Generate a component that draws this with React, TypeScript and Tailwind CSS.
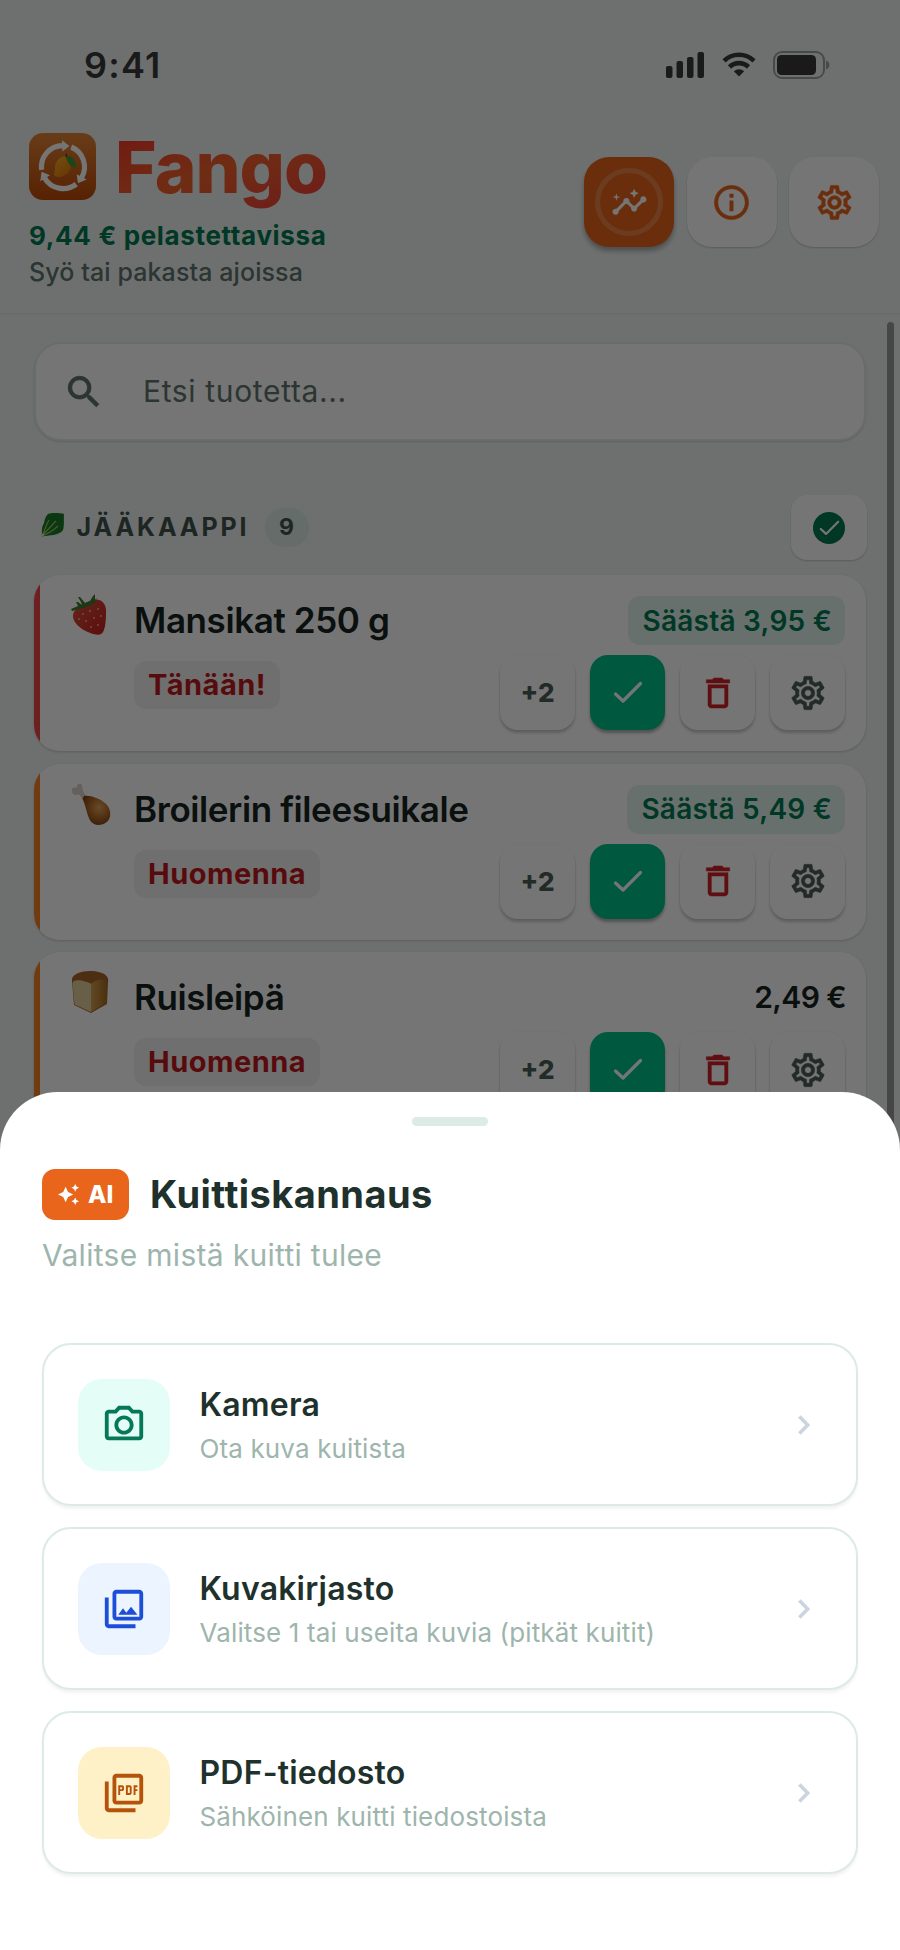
import React from "react";
import {
  MdSearch, MdInsights, MdInfoOutline, MdOutlineSettings, MdDeleteOutline, MdOutlineCameraAlt,
  MdOutlinePhotoLibrary, MdOutlinePictureAsPdf, MdAutoAwesome,
} from "react-icons/md";

function Logo() {
  const arm = (
    <>
      <path d="M12.6 36.9A21.4 21.4 0 0 1 34 12.6" fill="none" stroke="#fff" strokeWidth="5.2" />
      <path d="M33 7.2L40.5 13L33.4 18.6Z" fill="#fff" />
    </>
  );
  return (
    <svg viewBox="0 0 67 67" className="size-[67px] shrink-0 rounded-[14px]">
      <defs>
        <linearGradient id="lg" x1="0" y1="0" x2="0" y2="1">
          <stop offset="0" stopColor="#e48438" />
          <stop offset="1" stopColor="#bc4a06" />
        </linearGradient>
        <linearGradient id="mango" x1="0" y1="0" x2="0.7" y2="1">
          <stop offset="0" stopColor="#f5b320" />
          <stop offset="1" stopColor="#e8790f" />
        </linearGradient>
      </defs>
      <rect width="67" height="67" fill="url(#lg)" />
      <g>{arm}</g>
      <g transform="rotate(120 34 34)">{arm}</g>
      <g transform="rotate(240 34 34)">{arm}</g>
      <path d="M37 23C31 23 26 28 26 35C26 39 24 42 26 43C32 46 42 41 42 33C42 27 41 23 37 23Z" fill="url(#mango)" />
      <path d="M37 23C42 22 47 26 47 35C41 34 38 30 37 23Z" fill="#3f9a35" />
      <path d="M37 24L37.5 20.5" stroke="#5a3a18" strokeWidth="1.3" />
    </svg>
  );
}

function Leaf() {
  return (
    <svg viewBox="0 0 24 24" className="size-6">
      <path d="M8 1C12 -0.500 20 0 24 1C23.500 6 24.500 12 23 17C19 23 9 22 2 23.500C2 19 1 15 4 10C4.500 6 6 3 8 1Z" fill="#1c7a26" />
      <path d="M1.500 23C7 18 11 13 16 8M2.500 22C5 17 6 12 9 7M3 22.500C9 20 14 17 18 13" stroke="#9cc062" strokeWidth="1.200" fill="none" />
      <path d="M0.500 22L3.500 20.500L4.500 22L1.500 24Z" fill="#e3e8c0" />
    </svg>
  );
}

function Strawberry() {
  return (
    <svg viewBox="0 0 36 42" className="h-[42px] w-9">
      <defs>
        <linearGradient id="berry" x1="0" y1="0" x2="1" y2="1">
          <stop offset="0" stopColor="#e0503f" />
          <stop offset="1" stopColor="#c3201f" />
        </linearGradient>
      </defs>
      <path d="M22 6C30 4 36 10 35 19C35 28 34 38 30 40C25 43 4 35 2 23C1 15 12 9 22 6Z" fill="url(#berry)" />
      <path d="M0 15L7 12L5 8L7 8L11 11L10 8L7 3L9 3L14 9L19 7L22 2L24 0L24 6L26 4L23 10L15 13L9 15L1 17Z" fill="#3f7a2c" />
      <g fill="#f6b48a">
        <circle cx="12" cy="20" r=".9" /><circle cx="19" cy="17" r=".9" /><circle cx="27" cy="15" r=".9" />
        <circle cx="15" cy="27" r=".9" /><circle cx="23" cy="24" r=".9" /><circle cx="30" cy="22" r=".9" />
        <circle cx="20" cy="33" r=".9" /><circle cx="27" cy="31" r=".9" /><circle cx="8" cy="25" r=".9" />
      </g>
    </svg>
  );
}

function Drumstick() {
  return (
    <svg viewBox="0 0 40 42" className="h-[42px] w-10">
      <defs>
        <radialGradient id="drum" cx="0.6" cy="0.4" r="0.65">
          <stop offset="0" stopColor="#e0a558" />
          <stop offset="0.5" stopColor="#b8702c" />
          <stop offset="1" stopColor="#7e3f12" />
        </radialGradient>
      </defs>
      <path d="M1 8C0 5 4 3 6 5C5 1 10 -1 11 3C12 7 11 9 17 15L13 18C9 12 8 10 5 12C2 12 1 10 1 8Z" fill="#d9d2c6" />
      <path d="M13 13C20 12 34 17 38 25C42 35 36 42 27 42C16 41 17 28 11.500 15.500Z" fill="url(#drum)" />
    </svg>
  );
}

function Bread() {
  return (
    <svg viewBox="0 0 38 42" className="h-[42px] w-[38px]">
      <defs>
        <linearGradient id="side" x1="0" y1="0" x2="1" y2="0">
          <stop offset="0" stopColor="#d3a050" />
          <stop offset="1" stopColor="#a86a22" />
        </linearGradient>
      </defs>
      <path d="M1 10C0 3 10 0 19 0C28 0 39 3 37 11L36 33L20 42L3 34Z" fill="#a8642a" />
      <path d="M1.500 12C3 7 15 10 20.500 13L20 41L3.500 33.500Z" fill="#e3cfa0" />
      <path d="M20 13C25 8 35 7 36 12L35 32L20 41Z" fill="url(#side)" />
    </svg>
  );
}

function Check({ className }: { className: string }) {
  return (
    <svg viewBox="0 0 30 23" className={className} fill="none" stroke="currentColor" strokeWidth="3.2" strokeLinecap="round" strokeLinejoin="round">
      <path d="M2.500 13L10 20L27.500 2.500" />
    </svg>
  );
}

const actionClass =
  "flex size-[75px] items-center justify-center rounded-[18px] bg-white shadow-[0_3px_3px_rgba(0,0,0,0.2),0_0_1px_1px_rgba(0,0,0,0.025)]";

function ProductCard({ icon, name, due, accent, saving, price }: {
  icon: React.ReactNode; name: string; due: string; accent: string; saving?: string; price?: string;
}) {
  return (
    <div className="flex h-[176px] w-[832px] overflow-hidden rounded-[26px] bg-white shadow-[0_1px_3px_rgba(0,0,0,0.18)]">
      <div className={"w-1.5 shrink-0 " + accent} />
      <div className="flex flex-1 pl-[31px] pr-[21px] pt-5">
        <div className="-mt-px w-[63px] shrink-0">{icon}</div>
        <div className="flex flex-1 flex-col">
          <div className="flex h-[51px] items-center justify-between">
            <span className="text-[35px] font-semibold tracking-[-0.4px] text-[#16241f]">{name}</span>
            {saving ? (
              <span className="flex h-[49px] items-center rounded-xl bg-[#e0f5ee] pr-[13px] pl-[14px] text-[28px] font-semibold tracking-[0.25px] text-[#007a52]">
                {saving}
              </span>
            ) : (
              <span className="-mr-px text-[30px] font-semibold tracking-[-0.6px] text-[#16241f]">{price}</span>
            )}
          </div>
          <div className="flex justify-between">
            <span className="mt-[15px] flex h-12 items-center self-start rounded-xl bg-[#f2f2f2] px-3.5 text-[29px] font-bold tracking-[0.5px] text-[#c01a1e]">
              {due}
            </span>
            <div className="mt-[9px] flex gap-[15px]">
              <div className={actionClass}><span className="text-[26px] font-extrabold text-[#4d5f59]">+2</span></div>
              <div className="flex size-[75px] items-center justify-center rounded-[18px] bg-[#00c28a] text-white shadow-[0_3px_3px_rgba(0,0,0,0.3)]">
                <Check className="h-[23px] w-[30px]" />
              </div>
              <div className={actionClass}><MdDeleteOutline className="size-[40px] stroke-[0.3] text-[#cf2226] [&>path[fill=none]]:stroke-none" /></div>
              <div className={actionClass}><MdOutlineSettings className="size-[40px] stroke-[0.3] text-[#4d5f59] [&>path[fill=none]]:stroke-none" /></div>
            </div>
          </div>
        </div>
      </div>
    </div>
  );
}

function Option({ icon, tile, title, text }: { icon: React.ReactNode; tile: string; title: string; text: string }) {
  return (
    <div className="flex h-[163px] items-center rounded-[29px] border-2 border-[#dcebe6] bg-white pl-[34px] pr-[46px] shadow-[0_3px_3px_rgba(0,0,0,0.05)]">
      <div className={"flex size-[92px] items-center justify-center rounded-3xl " + tile}>{icon}</div>
      <div className="ml-[29.500px] flex flex-1 flex-col pt-[7px]">
        <span className="text-[32px] leading-[42px] font-semibold tracking-[0.2px] text-[#1f312c]">{title}</span>
        <span className="text-[26px] leading-[46px] tracking-[0.13px] text-[#9db5ac]">{text}</span>
      </div>
      <svg viewBox="0 0 12 20" className="h-5 w-3" fill="none" stroke="#cbd5e0" strokeWidth="3.6">
        <path d="M1.400 1.400L9.700 10L1.400 18.600" />
      </svg>
    </div>
  );
}

export default function App() {
  return (
    <div className="relative h-[1950px] w-[900px] overflow-hidden bg-[#f0f5f3] font-['Inter',sans-serif]">
      <div className="flex h-[129px] items-center pl-[84px] pr-[70px] text-[#3a3a3a]">
        <span className="flex-1 text-[36px] font-semibold tracking-[1.200px]">9:41</span>
        <svg viewBox="0 0 38 26" className="h-[26px] w-[38px]" fill="currentColor">
          <rect x="0" y="14" width="6.5" height="12" rx="2" /><rect x="10.5" y="9" width="6.5" height="17" rx="2" />
          <rect x="21" y="5" width="6.5" height="21" rx="2" /><rect x="31.5" y="0" width="6.5" height="26" rx="2" />
        </svg>
        <svg viewBox="0 0 34 25" className="ml-[18px] h-[25px] w-[34px]" fill="none" stroke="currentColor" strokeWidth="4.6">
          <path d="M2 8.8A21.5 21.5 0 0 1 32 8.8" /><path d="M7.5 15A13.5 13.5 0 0 1 26.500 15" />
          <path d="M17 24.500L11.800 19.300A7.500 7.500 0 0 1 22.200 19.300Z" fill="currentColor" stroke="none" />
        </svg>
        <svg viewBox="0 0 57 28" className="ml-[17px] h-7 w-[57px]">
          <rect x="1" y="1" width="50" height="26" rx="8" fill="none" stroke="currentColor" strokeWidth="2" opacity=".45" />
          <rect x="4" y="4" width="39" height="20" rx="4.500" fill="currentColor" />
          <path d="M53 9.500C57.500 10.500 57.500 17.500 53 18.500Z" fill="currentColor" opacity=".45" />
        </svg>
      </div>

      <div className="flex h-[186px] border-b-2 border-[#e2ecea] pl-[29px] pr-[21px]">
        <div className="flex flex-1 flex-col pt-1">
          <div className="flex h-[67px] items-center">
            <Logo />
            <span className="ml-[18px] bg-linear-to-br from-[#f8292a] via-[#f2622c] to-[#f0353a] bg-clip-text pl-px pr-1 text-[71px] leading-[90px] font-extrabold tracking-[-1px] text-transparent">Fango</span>
          </div>
          <span className="mt-[17.500px] text-[26px] leading-9 font-bold tracking-[0.65px] text-[#007a52]">9,44 € pelastettavissa</span>
          <span className="text-[25px] leading-9 font-medium tracking-[0.1px] text-[#5f746d]">Syö tai pakasta ajoissa</span>
        </div>
        <div className="mt-7 flex gap-[12.500px]">
          <div className="flex size-[90px] items-center justify-center rounded-[25px] bg-[#e8651b] shadow-[0_4px_5px_rgba(0,0,0,0.3)]">
            <div className="flex size-[68px] items-center justify-center rounded-full border-5 border-white/20">
              <MdInsights className="size-[37px] shrink-0 text-white" />
            </div>
          </div>
          <div className="flex size-[90px] items-center justify-center rounded-[25px] bg-white shadow-[0_1px_2px_rgba(0,0,0,0.2)]">
            <MdInfoOutline className="size-[41px] stroke-[0.3] text-[#e8651b] [&>path[fill=none]]:stroke-none" />
          </div>
          <div className="flex size-[90px] items-center justify-center rounded-[25px] bg-white shadow-[0_1px_2px_rgba(0,0,0,0.2)]">
            <MdOutlineSettings className="size-[41px] stroke-[0.3] text-[#e8651b] [&>path[fill=none]]:stroke-none" />
          </div>
        </div>
      </div>

      <div className="flex flex-col px-[34px] pt-[27px]">
        <div className="flex h-[99px] items-center rounded-[27px] border-2 border-[#e2ecea] bg-white pl-[27px] shadow-[0_1px_2px_rgba(0,0,0,0.15)]">
          <MdSearch className="size-[42px] stroke-[0.5] text-[#5f746d] [&>path[fill=none]]:stroke-none" />
          <span className="ml-[38px] text-[30px] tracking-[0.65px] text-[#5f746d]">Etsi tuotetta...</span>
        </div>
        <div className="mt-[54px] flex h-[65px] items-center">
          <div className="ml-1.5 pb-1.5"><Leaf /></div>
          <span className="ml-[12.500px] text-[25px] font-bold tracking-[2.900px] text-[#42544e]">JÄÄKAAPPI</span>
          <span className="ml-[15px] flex h-[39px] w-[44px] items-center justify-center rounded-[19px] bg-[#dcebe6] text-[23px] font-bold text-[#42544e]">9</span>
          <div className="-mr-px ml-auto flex h-[65px] w-[76px] items-center justify-center rounded-[16px] bg-white shadow-[0_1px_2px_rgba(0,0,0,0.2)]">
            <div className="flex size-8 items-center justify-center rounded-full bg-[#007a52] text-white">
              <Check className="h-[16px] w-[21px]" />
            </div>
          </div>
        </div>
        <div className="mt-[15px] flex flex-col gap-[12.500px]">
          <ProductCard icon={<Strawberry />} name="Mansikat 250 g" due="Tänään!" accent="bg-[#ef4444]" saving="Säästä 3,95 €" />
          <ProductCard icon={<Drumstick />} name="Broilerin fileesuikale" due="Huomenna" accent="bg-[#f58220]" saving="Säästä 5,49 €" />
          <ProductCard icon={<Bread />} name="Ruisleipä" due="Huomenna" accent="bg-[#f58220]" price="2,49 €" />
        </div>
      </div>

      <div className="absolute top-[322px] right-[6.500px] h-[900px] w-[6.500px] rounded-full bg-[#999]" />
      <div className="absolute inset-0 bg-black/54" />

      <div className="absolute inset-x-0 bottom-0 flex h-[858px] flex-col rounded-t-[58px] bg-white px-[42px]">
        <div className="mt-[25px] h-[9px] w-[76px] self-center rounded-full bg-[#dcebe6]" />
        <div className="mt-[43px] flex h-[51px] items-center">
          <div className="flex h-[51px] w-[87px] items-center rounded-[13px] bg-[#e8651b] pl-[15px] text-white">
            <MdAutoAwesome className="size-[23px]" />
            <span className="ml-2 text-[24px] font-extrabold">AI</span>
          </div>
          <span className="ml-[21px] text-[38px] font-bold tracking-[0.45px] text-[#1f312c]">Kuittiskannaus</span>
        </div>
        <span className="mt-3.5 text-[30px] leading-[42px] tracking-[0.3px] text-[#9db5ac]">Valitse mistä kuitti tulee</span>
        <div className="mt-[67px] flex flex-col gap-[21px]">
          <Option icon={<MdOutlineCameraAlt className="size-[46px] text-[#047857]" />} tile="bg-[#e4fdf6]" title="Kamera" text="Ota kuva kuitista" />
          <Option icon={<MdOutlinePhotoLibrary className="size-[46px] text-[#1d4ed8]" />} tile="bg-[#ecf4ff]" title="Kuvakirjasto" text="Valitse 1 tai useita kuvia (pitkät kuitit)" />
          <Option icon={<MdOutlinePictureAsPdf className="size-[46px] text-[#b45309]" />} tile="bg-[#fef1c7]" title="PDF-tiedosto" text="Sähköinen kuitti tiedostoista" />
        </div>
      </div>
    </div>
  );
}
